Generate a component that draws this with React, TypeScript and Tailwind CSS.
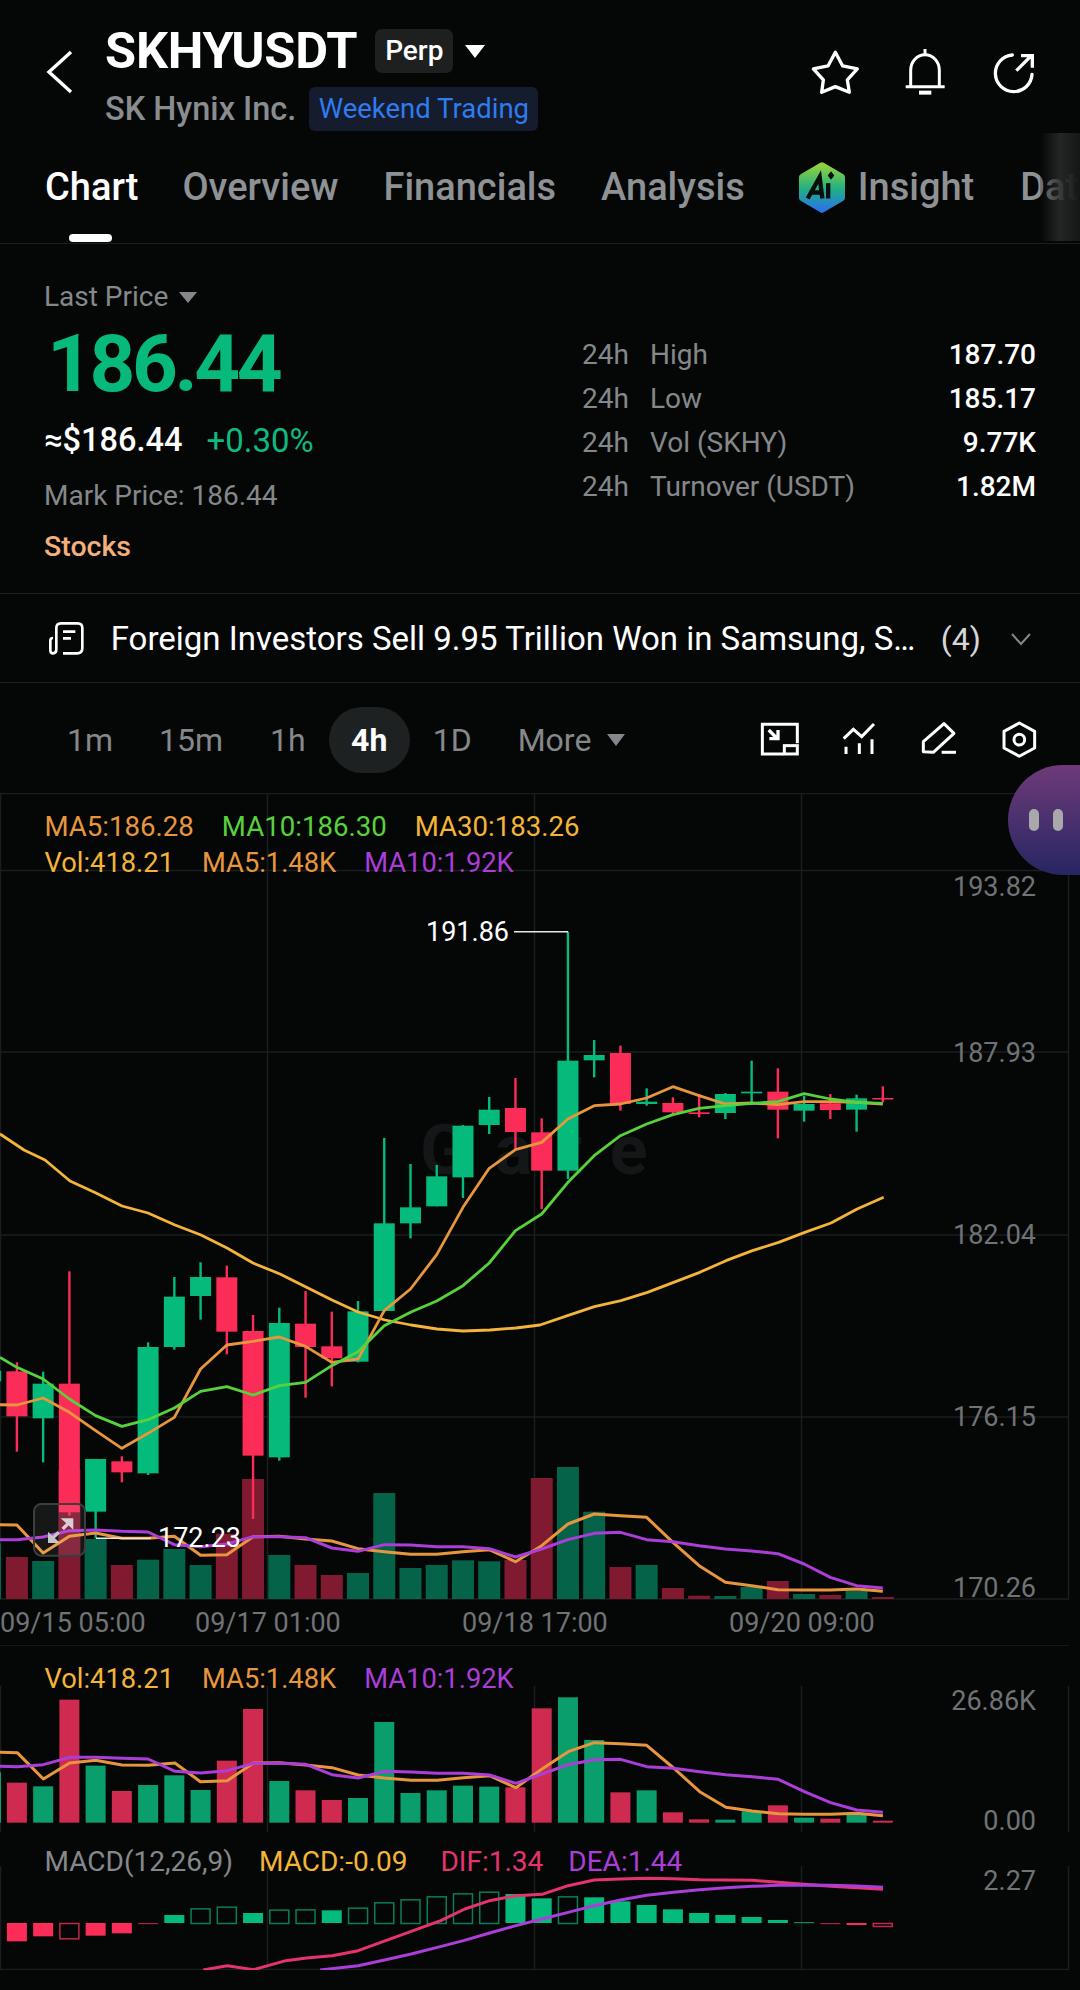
import React from "react";

const GREEN = "#05bb7c";
const RED = "#fc2c58";
const ORANGE = "#e8963e";
const LIME = "#58d23c";
const YELLOW = "#f4b437";
const PURPLE = "#ab3dd8";
const PINK = "#e5336e";
const GRID = "#1b1d1e";
const AXIS = "#707375";

const X = (i: number) => 16.9 + 26.24 * i;
const Z5 = (z: number) => 1150 + z / 3;
const Z4 = (z: number) => 760 + z / 3;
const Z6 = (z: number) => 1200 + z / 3;
const Z7 = (z: number) => 1620 + z / 3;

type C = [number, "g" | "r", number, number, number, number];
const candles: C[] = [
  [-1, "g", Z5(640), Z5(720), Z5(665), Z5(697)],
  [0, "r", Z5(640), Z5(908), Z5(667), Z5(802)],
  [1, "g", Z5(668), Z5(940), Z5(704), Z5(808)],
  [2, "r", Z5(367), Z5(1100), Z5(704), Z5(1090)],
  [3, "g", Z5(930), Z5(1168), Z5(930), Z5(1088)],
  [4, "r", Z5(922), Z5(1000), Z5(937), Z5(970)],
  [5, "g", Z5(580), Z5(978), Z5(594), Z5(973)],
  [6, "g", Z5(384), Z5(602), Z5(443), Z5(594)],
  [7, "g", Z5(340), Z5(512), Z5(384), Z5(441)],
  [8, "r", Z5(350), Z5(616), Z5(385), Z5(548)],
  [9, "r", Z5(498), Z5(1110), Z5(546), Z5(920)],
  [10, "g", Z5(476), Z5(935), Z5(522), Z5(925)],
  [11, "r", Z5(426), Z5(746), Z5(524), Z5(594)],
  [12, "r", Z5(488), Z5(712), Z5(592), Z5(628)],
  [13, "g", Z5(456), Z5(640), Z5(487), Z5(638)],
  [14, "g", 1139, Z5(486), Z5(223), Z5(486)],
  [15, "g", Z5(45), Z5(268), Z5(175), Z5(223)],
  [16, "g", Z5(48), Z5(172), Z5(82), Z5(172)],
  [17, "g", 1126, Z5(147), 1126.7, Z5(85)],
  [18, "g", 1098, 1135, 1110.7, 1126],
  [19, "r", 1079, 1150, 1109, 1133],
  [20, "r", Z4(1078), Z4(1350), Z4(1120), Z4(1235)],
  [21, "g", Z4(518), Z4(1260), Z4(905), Z4(1235)],
  [22, "g", Z4(843), Z4(955), Z4(888), Z4(904)],
  [23, "r", Z4(860), Z4(1055), Z4(882), Z4(1035)],
  [24, "g", Z4(988), Z4(1040), Z4(1028), Z4(1035)],
  [25, "r", Z4(1015), Z4(1070), Z4(1032), Z4(1060)],
  [26, "r", Z4(1005), Z4(1075), Z4(1060), Z4(1065)],
  [27, "g", Z4(1002), Z4(1080), Z4(1005), Z4(1062)],
  [28, "g", Z4(905), Z4(1035), Z4(998), Z4(1003)],
  [29, "r", Z4(928), Z4(1138), Z4(998), Z4(1052)],
  [30, "g", Z4(1010), Z4(1088), Z4(1035), Z4(1055)],
  [31, "r", Z4(1005), Z4(1080), Z4(1033), Z4(1053)],
  [32, "g", Z4(1007), Z4(1118), Z4(1018), Z4(1052)],
  [33, "r", Z4(982), Z4(1030), Z4(1017), Z4(1020)],
];

const dirs = candles.filter((c) => c[0] >= 0).map((c) => c[1]);

// tops of the upper volume bars, real y
const volTop = [
  Z5(1224), Z5(1236), Z5(961), Z5(1170), Z5(1248), Z5(1232), Z5(1200), Z5(1248), Z5(1154), Z5(990), Z5(1218),
  Z5(1248), Z5(1278), Z5(1272), Z5(1032), Z5(1257), Z5(1248), Z5(1234), Z5(1237), Z5(1233),
  1479, 1468, 1512.7, 1568, 1566, 1589, 1596.7, 1597, 1588, 1582, 1595, 1596, 1592, 1598,
];
// tops of the lower volume bars, zoom units
const vol2 = [
  491, 502, 242, 440, 516, 498, 469, 513, 425, 270, 486, 514, 543, 537, 309, 522, 514, 500, 503, 505, 268, 235, 363,
  520, 514, 580, 601, 602, 577, 559, 596, 599, 586, 605,
];

const ma5 = [
  [-6, Z5(767)], [16.9, Z5(768)], ...[
    [1, Z5(747)], [2, Z5(790)], [3, Z5(845)], [4, Z5(898)], [5, Z5(853)], [6, Z5(805)], [7, Z5(660)], [8, Z5(588)],
    [9, Z5(577)], [10, Z5(564)], [11, Z5(592)], [12, Z5(640)], [13, Z5(630)], [14, Z5(485)], [15, Z5(420)],
    [16, Z5(317)], [17, Z5(175)], [18, Z5(58)], [19, Z5(2)], [20, Z4(1150)], [21, Z4(1080)], [22, Z4(1040)],
    [23, Z4(1035)], [24, Z4(1017)], [25, Z4(983)], [26, Z4(1010)], [27, Z4(1035)], [28, Z4(1032)], [29, Z4(1037)],
    [30, Z4(1028)], [31, Z4(1028)], [32, Z4(1030)], [33, Z4(1035)],
  ].map(([i, y]) => [X(i), y]),
];
const ma10 = [
  [0, Z5(625)], ...[
    [0, Z5(655)], [1, Z5(690)], [2, Z5(750)], [3, Z5(800)], [4, Z5(832)], [5, Z5(812)], [6, Z5(777)], [7, Z5(727)],
    [8, Z5(713)], [9, Z5(738)], [10, Z5(710)], [11, Z5(700)], [12, Z5(650)], [13, Z5(608)], [14, Z5(530)],
    [15, Z5(490)], [16, Z5(456)], [17, Z5(410)], [18, Z5(342)], [19, Z5(245)], [20, Z4(1365)], [21, Z4(1270)],
    [22, Z4(1190)], [23, Z4(1130)], [24, Z4(1095)], [25, Z4(1067)], [26, Z4(1048)], [27, Z4(1040)], [28, Z4(1033)],
    [29, Z4(1028)], [30, Z4(1004)], [31, Z4(1020)], [32, Z4(1030)], [33, Z4(1033)],
  ].map(([i, y]) => [X(i), y]),
];
const ma30 = [
  [0, 1135], [24, 1151], [45, 1161], [70, 1182], [96, 1194], [122, 1207], [148, 1214], [175, 1226], [201, 1236],
  [227, 1249], [253, 1264], [280, 1275], [306, 1288], [332, 1301], [358, 1313], [385, 1321], [411, 1326], [437, 1330],
  [463, 1332], [490, 1331], [516, 1329], [540, 1326],
  ...[
    [80, 350], [158, 323], [235, 305], [312, 280], [388, 250], [464, 220], [540, 185], [617, 155], [693, 130],
    [769, 100], [845, 72], [921, 30], [998, -5],
  ].map(([x, y]) => [540 + x / 2.904, Z6(y)]),
];

const vMa5 = [
  [0, Z5(1127)], [16.9, Z5(1128)], ...[
    [1, 1212], [2, 1162], [3, 1152], [4, 1168], [5, 1168], [6, 1162], [7, 1219], [8, 1217], [9, 1163], [10, 1162],
    [11, 1170], [12, 1176], [13, 1199], [14, 1208], [15, 1216], [16, 1216], [17, 1208], [18, 1202], [19, 1238],
  ].map(([i, z]) => [X(i), Z5(z)]),
  ...[
    [20, 1040], [21, 975], [22, 945], [23, 950], [24, 955], [25, 1030], [26, 1100], [27, 1150], [28, 1160], [29, 1172],
    [30, 1173], [31, 1173], [32, 1170], [33, 1177],
  ].map(([i, z]) => [X(i), Z6(z)]),
];
const vMa10 = [
  [0, Z5(1172)], [16.9, Z5(1172)], ...[
    [1, 1164], [2, 1145], [3, 1143], [4, 1147], [5, 1149], [6, 1187], [7, 1193], [8, 1185], [9, 1163], [10, 1163],
    [11, 1166], [12, 1197], [13, 1207], [14, 1187], [15, 1188], [16, 1193], [17, 1193], [18, 1199], [19, 1224],
  ].map(([i, z]) => [X(i), Z5(z)]),
  ...[
    [20, 1050], [21, 1022], [22, 1003], [23, 1000], [24, 1022], [25, 1028], [26, 1040], [27, 1050], [28, 1056],
    [29, 1064], [30, 1095], [31, 1135], [32, 1160], [33, 1167],
  ].map(([i, z]) => [X(i), Z6(z)]),
];

const toPts = (a: number[][]) => a.map(([x, y]) => `${x / 1.452},${Z7(y)}`).join(" ");
const lowMa5 = [
  [0, 400], [25, 401], [63, 480], [101, 432], [139, 424], [177, 438], [215, 439], [254, 432], [291, 488], [330, 485],
  [368, 432], [406, 431], [444, 438], [482, 446], [520, 468], [558, 477], [597, 484], [635, 484], [673, 476], [711, 470],
  [749, 506], [787, 450], [825, 398], [863, 371], [901, 374], [939, 379], [978, 447], [1016, 518], [1054, 565],
  [1092, 576], [1130, 584], [1168, 586], [1206, 586], [1244, 583], [1282, 590],
];
const lowMa10 = [
  [0, 442], [25, 443], [63, 437], [101, 415], [139, 415], [177, 418], [215, 420], [254, 457], [291, 462], [330, 455],
  [368, 433], [406, 433], [444, 436], [482, 467], [520, 477], [558, 457], [597, 459], [635, 463], [673, 463], [711, 468],
  [749, 493], [787, 465], [825, 437], [863, 422], [901, 421], [939, 443], [978, 448], [1016, 458], [1054, 467],
  [1092, 473], [1130, 481], [1168, 518], [1206, 551], [1244, 573], [1282, 580],
];
const dif = [
  [295, 1053], [330, 1040], [368, 1052], [415, 1025], [445, 1017], [482, 1010], [520, 995], [560, 965], [600, 935],
  [640, 905], [675, 870], [711, 845], [749, 830], [787, 826], [825, 800], [863, 783], [900, 780], [940, 778], [978, 779],
  [1016, 782], [1054, 783], [1092, 784], [1130, 790], [1168, 796], [1206, 802], [1244, 806], [1282, 811],
];
const dea = [
  [465, 1053], [520, 1040], [560, 1022], [597, 1005], [635, 985], [673, 965], [711, 942], [749, 920], [787, 900],
  [825, 880], [863, 860], [901, 843], [939, 829], [978, 820], [1016, 812], [1054, 806], [1092, 802], [1130, 799],
  [1168, 798], [1206, 799], [1244, 801], [1282, 805],
];
// [end value in zoom units, hollow]
const macd: [number, boolean][] = [
  [967, false], [952, false], [958, true], [950, false], [943, false], [915, false], [888, false], [868, true],
  [863, true], [882, false], [872, true], [871, true], [874, false], [866, true], [850, true], [841, true], [832, true],
  [823, true], [818, true], [825, false], [838, false], [832, true], [835, false], [847, false], [858, false],
  [871, false], [882, false], [888, false], [894, false], [903, false], [909, false], [914, false], [918, false],
  [921, true],
];

const pts = (a: number[][]) => a.map(([x, y]) => `${x},${y}`).join(" ");

const AxisText = ({ y, children }: { y: number; children: React.ReactNode }) => (
  <text x={1036} y={y} textAnchor="end" dominantBaseline="central" fill={AXIS} fontSize={27}>
    {children}
  </text>
);

const MainChart = () => (
  <svg width={1080} height={852} viewBox="0 794 1080 852" className="absolute inset-0">
    <g stroke={GRID} strokeWidth={1.5} fill="none">
      {[794.5, 871.5, 1053, 1236, 1418, 1600].map((y) => (
        <line key={y} x1={0} x2={y === 794.5 ? 1080 : 1069} y1={y} y2={y} />
      ))}
      {[0.5, 267.5, 534.5, 801.5, 1068.5].map((x) => (
        <line key={x} x1={x} x2={x} y1={794} y2={1600} />
      ))}
    </g>
    <text x={420} y={1175} fontSize={70} fontWeight={700} fill="#141617" letterSpacing={27}>
      Gate
    </text>
    {volTop.map((t, i) => (
      <rect
        key={i}
        x={X(i) - 11}
        y={t}
        width={22}
        height={1600 - t}
        fill={dirs[i] === "g" ? "#05634a" : "#7f1a31"}
      />
    ))}
    <rect x={-19} y={Z5(1183)} width={20} height={1600 - Z5(1183)} fill="#05634a" />
    {candles.map(([i, d, wt, wb, bt, bb]) => {
      const color = d === "g" ? GREEN : RED;
      return (
        <g key={i} fill={color}>
          <rect x={X(i) - 1.2} y={wt} width={2.4} height={wb - wt} />
          <rect x={X(i) - 10.5} y={bt} width={21} height={Math.max(bb - bt, 1.5)} />
        </g>
      );
    })}
    <g fill="none" strokeWidth={2.8} strokeLinejoin="round">
      <polyline points={pts(ma30)} stroke={YELLOW} />
      <polyline points={pts(ma5)} stroke={ORANGE} />
      <polyline points={pts(ma10)} stroke={LIME} />
      <polyline points={pts(vMa5)} stroke={ORANGE} strokeWidth={3} />
      <polyline points={pts(vMa10)} stroke={PURPLE} strokeWidth={3} />
    </g>
    <polyline points="514,932.7 568,932.7" stroke="#e8e8e8" strokeWidth={1.5} fill="none" />
    <polyline points="96,1539.3 151,1539.3" stroke="#e8e8e8" strokeWidth={1.5} fill="none" />
    <text x={426} y={932.5} dominantBaseline="central" fill="#fff" fontSize={27}>
      191.86
    </text>
    <text x={158} y={1539} dominantBaseline="central" fill="#fff" fontSize={27}>
      172.23
    </text>
    <AxisText y={888}>193.82</AxisText>
    <AxisText y={1053.5}>187.93</AxisText>
    <AxisText y={1236}>182.04</AxisText>
    <AxisText y={1417.5}>176.15</AxisText>
    <AxisText y={1589}>170.26</AxisText>
    <g fill={AXIS} fontSize={27} dominantBaseline="central">
      <text x={0} y={1624}>09/15 05:00</text>
      <text x={195} y={1624}>09/17 01:00</text>
      <text x={462} y={1624}>09/18 17:00</text>
      <text x={729} y={1624}>09/20 09:00</text>
    </g>
    <g transform="translate(20,1490) scale(0.3333)">
      <rect x={42} y={45} width={153} height={155} rx={22} fill="rgba(255,255,255,0.07)" stroke="#3c3e3f" strokeWidth={6} />
      <polygon points="122,88 160,88 160,122" fill="#d8ced6" />
      <line x1={148} y1={100} x2={128} y2={120} stroke="#d8ced6" strokeWidth={10} />
      <polygon points="84,128 84,162 120,162" fill="#c9c4c9" />
      <line x1={95} y1={150} x2={116} y2={130} stroke="#c9c4c9" strokeWidth={10} />
    </g>
  </svg>
);

const VolumeChart = () => (
  <svg width={1080} height={194} viewBox="0 1646 1080 194" className="absolute inset-0">
    <line x1={0} x2={1069} y1={1646} y2={1646} stroke={GRID} strokeWidth={1.5} />
    <g stroke={GRID} strokeWidth={1.5}>
      {[0.5, 267.5, 534.5, 801.5, 1068.5].map((x) => (
        <line key={x} x1={x} x2={x} y1={1687} y2={1833} />
      ))}
    </g>
    <rect x={-20} y={Z7(460)} width={21} height={Z7(611) - Z7(460)} fill="#0a9e6c" />
    {vol2.map((t, i) => (
      <rect
        key={i}
        x={X(i) - 10}
        y={Z7(t)}
        width={20}
        height={Z7(611) - Z7(t)}
        fill={dirs[i] === "g" ? "#0a9e6c" : "#cf2a50"}
      />
    ))}
    <g fill="none" strokeWidth={3} strokeLinejoin="round">
      <polyline points={toPts(lowMa5)} stroke={ORANGE} />
      <polyline points={toPts(lowMa10)} stroke={PURPLE} />
    </g>
    <AxisText y={1701.5}>26.86K</AxisText>
    <AxisText y={1821.5}>0.00</AxisText>
  </svg>
);

const MacdChart = () => (
  <svg width={1080} height={131} viewBox="0 1840 1080 131" className="absolute inset-0">
    <g stroke={GRID} strokeWidth={1.5}>
      {[0.5, 267.5, 534.5, 801.5, 1068.5].map((x) => (
        <line key={x} x1={x} x2={x} y1={1867} y2={1971} />
      ))}
      <line x1={0} x2={1069} y1={1970.5} y2={1970.5} />
    </g>
    {macd.map(([end, hollow], i) => {
      const up = end < 912;
      const top = Z7(Math.min(end, 912));
      const h = Math.abs(end - 912) / 3;
      const color = up ? GREEN : RED;
      const thin = h < 2;
      return hollow ? (
        <rect
          key={i}
          x={X(i) - 9.5}
          y={top + 0.5}
          width={19}
          height={h}
          fill="none"
          stroke={up ? "#0a7d58" : "#c42748"}
          strokeWidth={1.5}
        />
      ) : (
        <rect
          key={i}
          x={X(i) - 10}
          y={top}
          width={20}
          height={Math.max(h, 1.2)}
          fill={thin && !up ? "#a82342" : thin ? "#0a8a60" : color}
        />
      );
    })}
    <g fill="none" strokeWidth={3} strokeLinejoin="round">
      <polyline points={toPts(dif)} stroke={PINK} />
      <polyline points={toPts(dea)} stroke={PURPLE} />
    </g>
    <AxisText y={1882}>2.27</AxisText>
  </svg>
);

const VolLegend = () => (
  <div className="flex gap-[28px] text-[27.3px]">
    <span className="text-[#f4b437]">Vol:418.21</span>
    <span className="text-[#e8963e]">MA5:1.48K</span>
    <span className="text-[#ab3dd8]">MA10:1.92K</span>
  </div>
);

const Caret = ({ w, h, color }: { w: number; h: number; color: string }) => (
  <svg width={w} height={h} viewBox="0 0 20 12" preserveAspectRatio="none">
    <polygon points="0,0 20,0 10,12" fill={color} />
  </svg>
);

const Row = ({ label, value }: { label: string; value: string }) => (
  <div className="flex h-[44px] items-center text-[28px]">
    <span className="w-[68px] text-[#85888a]">24h</span>
    <span className="text-[#85888a]">{label}</span>
    <span className="ml-auto font-medium text-white">{value}</span>
  </div>
);

export default function App() {
  return (
    <div className="relative flex h-[1990px] w-[1080px] flex-col overflow-hidden bg-[#050707] font-[family-name:Roboto,sans-serif]">
      {/* header */}
      <header className="flex h-[133px] shrink-0 items-start">
        <svg width={30} height={48} viewBox="0 0 30 48" className="ml-[45px] mt-[48px]" fill="none">
          <polyline points="26,4 4,24 26,44" stroke="#fff" strokeWidth={3.4} />
        </svg>
        <div className="ml-[30px] flex flex-col">
          <div className="mt-[23px] flex h-[56px] items-center">
            <span className="text-[50.5px] font-bold leading-[56px] tracking-[-0.2px] text-white">SKHYUSDT</span>
            <span className="ml-[18px] flex h-[44px] w-[78px] items-center justify-center rounded-[7px] bg-[#1e2020] text-[28px] font-medium text-white">
              Perp
            </span>
            <span className="ml-[12px]">
              <Caret w={20} h={13} color="#fff" />
            </span>
          </div>
          <div className="mt-[8px] flex h-[44px] items-center">
            <span className="text-[32.5px] font-medium leading-[44px] text-[#8a8d8f]">SK Hynix Inc.</span>
            <span className="ml-[13px] flex h-[44px] w-[229px] items-center justify-center rounded-[6px] bg-[#151c2d] text-[27.5px] text-[#2f7bf0]">
              Weekend Trading
            </span>
          </div>
        </div>
        <div className="ml-auto mr-[43px] mt-[48px] flex items-start">
          <svg width={51.7} height={48.3} viewBox="90 25 155 145" fill="none">
            <polygon
              points="166,38 188,79 232,88 202,121 208,158 166,141 125,158 130,121 100,88 144,79"
              stroke="#fff"
              strokeWidth={10}
              strokeLinejoin="round"
            />
          </svg>
          <svg width={41.7} height={48.3} viewBox="370 25 125 145" fill="none" className="ml-[41.6px]">
            <path d="M390 140 V92 a43 47 0 0 1 86 0 V140" stroke="#fff" strokeWidth={9} />
            <path d="M375 141 H492" stroke="#fff" strokeWidth={9} />
            <rect x={415} y={153} width={37} height={12} fill="#fff" />
            <path d="M433 28 V46" stroke="#fff" strokeWidth={9} />
          </svg>
          <svg width={45} height={48.3} viewBox="635 25 135 145" fill="none" className="ml-[46.7px]">
            <path
              d="M696 46 A55 55 0 1 0 755 104"
              stroke="#fff"
              strokeWidth={10}
              strokeLinecap="round"
            />
            <path d="M708 93 L752 49 M722 48 H756 V84" stroke="#fff" strokeWidth={10} />
          </svg>
        </div>
      </header>

      {/* tabs */}
      <nav className="relative flex h-[111px] shrink-0 overflow-hidden border-b-[1.5px] border-[#1b1d1e] pl-[45px] text-[38px] font-medium text-[#8f9294]">
        <div className="relative flex h-[108px] items-center pr-[44px]">
          <span className="text-white">Chart</span>
          <span className="absolute bottom-[-1px] left-[24px] h-[8px] w-[43px] rounded-[4px] bg-white" />
        </div>
        <div className="flex h-[108px] items-center">
          <span>Overview</span>
          <span className="ml-[45px]">Financials</span>
          <span className="ml-[45px]">Analysis</span>
          <svg width={46} height={51} viewBox="50 365 138 152" className="ml-[54px]">
            <defs>
              <linearGradient id="ai" x1="0" y1="0" x2="0" y2="1">
                <stop offset="0" stopColor="#8fd23f" />
                <stop offset="0.55" stopColor="#1fae86" />
                <stop offset="1" stopColor="#2a76e6" />
              </linearGradient>
            </defs>
            <polygon
              points="119,375 178,410 178,472 119,507 60,472 60,410"
              fill="url(#ai)"
              stroke="url(#ai)"
              strokeWidth={20}
              strokeLinejoin="round"
            />
            <path d="M76 474 L112 410 L120 474 M88 456 H118" fill="none" stroke="#0a0f0d" strokeWidth={13} />
            <rect x={131} y={428} width={13} height={46} fill="#0a0f0d" />
            <polygon points="146,392 156,405 146,418 136,405" fill="#0a0f0d" />
          </svg>
          <span className="ml-[13px]">Insight</span>
          <span className="ml-[46px]">Data</span>
        </div>
        <div className="absolute right-0 top-0 h-[108px] w-[40px] bg-linear-to-r from-[#050707]/20 via-[#2a2c2c]/85 to-[#151717]" />
      </nav>

      {/* stats */}
      <section className="flex h-[350px] shrink-0 justify-between border-b-[1.5px] border-[#1b1d1e] pl-[44px] pr-[44px]">
        <div className="flex flex-col pt-[35px]">
          <div className="flex h-[36px] items-center text-[28px] text-[#85888a]">
            Last Price
            <span className="ml-[11px]">
              <Caret w={18} h={11} color="#85888a" />
            </span>
          </div>
          <div className="ml-[3px] mt-[8.5px] text-[80px] font-bold leading-[80px] tracking-[-3.4px] text-[#08b97c]">
            186.44
          </div>
          <div className="mt-[17px] flex h-[40px] items-center">
            <span className="text-[32.5px] font-medium text-white">≈$186.44</span>
            <span className="ml-[24px] text-[33px] text-[#0fb981]">+0.30%</span>
          </div>
          <div className="mt-[17px] h-[36px] text-[28px] leading-[36px] text-[#85888a]">Mark Price: 186.44</div>
          <div className="mt-[15px] h-[36px] text-[28.5px] font-medium leading-[36px] text-[#f3b07c]">Stocks</div>
        </div>
        <div className="w-[454px] pt-[89px]">
          <Row label="High" value="187.70" />
          <Row label="Low" value="185.17" />
          <Row label="Vol (SKHY)" value="9.77K" />
          <Row label="Turnover (USDT)" value="1.82M" />
        </div>
      </section>

      {/* news */}
      <section className="flex h-[89px] shrink-0 items-center border-b-[1.5px] border-[#1b1d1e] pt-[1px]">
        <svg width={40} height={36.7} viewBox="50 30 120 110" fill="none" className="ml-[46.7px]">
          <path
            d="M98 130 H140 Q156 130 156 114 V54 Q156 40 142 40 H92 Q78 40 78 54 V118 Q78 130 68 130 Q60 130 60 120 V92 Q60 84 68 84"
            stroke="#fff"
            strokeWidth={8}
          />
          <path d="M98 65 H135 M98 85 H122" stroke="#fff" strokeWidth={8} />
        </svg>
        <span className="ml-[24px] w-[806px] whitespace-nowrap text-[33px] text-white">
          Foreign Investors Sell 9.95 Trillion Won in Samsung, S…
        </span>
        <span className="ml-[24px] text-[32px] text-[#d5d6d7]">(4)</span>
        <svg width={22} height={14} viewBox="0 0 22 14" fill="none" className="ml-[29px]">
          <polyline points="2,2 11,12 20,2" stroke="#85888a" strokeWidth={2} />
        </svg>
      </section>

      {/* timeframes */}
      <section className="flex h-[110px] shrink-0 items-center pl-[67px] pt-[3px] text-[32px] text-[#85888a]">
        <span>1m</span>
        <span className="ml-[46px]">15m</span>
        <span className="ml-[47px]">1h</span>
        <span className="ml-[23px] flex h-[66px] w-[81px] items-center justify-center rounded-full bg-[#1e2121] font-bold text-white">
          4h
        </span>
        <span className="ml-[23px]">1D</span>
        <span className="ml-[46px]">More</span>
        <span className="ml-[16px]">
          <Caret w={18} h={12} color="#85888a" />
        </span>
        <div className="ml-auto mr-[43px] flex items-center">
          <svg width={41.7} height={38.3} viewBox="55 60 125 115" fill="none">
            <path d="M128 162 H65 V73 H170 V130" stroke="#fff" strokeWidth={9} />
            <rect x={131} y={137} width={39} height={25} stroke="#fff" strokeWidth={9} />
            <path d="M84 90 L108 114 M86 116 H112 V90" stroke="#fff" strokeWidth={10} />
          </svg>
          <svg width={36.7} height={38.3} viewBox="300 60 110 115" fill="none" className="ml-[40px]">
            <polyline points="311,116 340,88 365,110 402,72" stroke="#fff" strokeWidth={9} />
            <path d="M318 140 V162 M358 130 V162 M396 118 V162" stroke="#fff" strokeWidth={9} />
          </svg>
          <svg width={38.3} height={38.3} viewBox="540 60 115 115" fill="none" className="ml-[43.3px]">
            <polygon points="550,155 550,125 612,71 642,100 580,157" stroke="#fff" strokeWidth={9} strokeLinejoin="round" />
            <path d="M605 157 H648" stroke="#fff" strokeWidth={9} />
          </svg>
          <svg width={35} height={38.3} viewBox="785 60 105 115" fill="none" className="ml-[43.4px]">
            <polygon points="837,69 883,94 883,144 837,169 791,144 791,94" stroke="#fff" strokeWidth={9} strokeLinejoin="round" />
            <circle cx={837} cy={119} r={16} stroke="#fff" strokeWidth={9} />
          </svg>
        </div>
      </section>

      {/* main chart */}
      <section className="relative h-[852px] shrink-0">
        <MainChart />
        <div className="absolute left-[44.5px] top-[15px] flex flex-col leading-[37px]">
          <div className="flex gap-[28px] text-[27.6px]">
            <span className="text-[#e8963e]">MA5:186.28</span>
            <span className="text-[#58d23c]">MA10:186.30</span>
            <span className="text-[#f4b437]">MA30:183.26</span>
          </div>
          <VolLegend />
        </div>
      </section>

      {/* volume */}
      <section className="relative h-[194px] shrink-0">
        <VolumeChart />
        <div className="absolute left-[44.5px] top-[15.5px] leading-[37px]">
          <VolLegend />
        </div>
      </section>

      {/* macd */}
      <section className="relative h-[131px] shrink-0">
        <MacdChart />
        <div className="absolute left-[44.5px] top-[3.5px] flex text-[28px] leading-[37px]">
          <span className="text-[#85888a]">MACD(12,26,9)</span>
          <span className="ml-[26px] text-[#f4b437]">MACD:-0.09</span>
          <span className="ml-[33px] text-[#e5336e]">DIF:1.34</span>
          <span className="ml-[25px] text-[#ab3dd8]">DEA:1.44</span>
        </div>
      </section>

      {/* floating bubble */}
      <div className="absolute left-[1008px] top-[765px] flex h-[110px] w-[72px] items-center gap-[14px] rounded-l-[55px] bg-linear-to-b from-[#6e3a78] to-[#262563] pl-[21px]">
        <span className="h-[22px] w-[10px] rounded-full bg-[#a9a9ac]" />
        <span className="h-[22px] w-[10px] rounded-full bg-[#a9a9ac]" />
      </div>
    </div>
  );
}
